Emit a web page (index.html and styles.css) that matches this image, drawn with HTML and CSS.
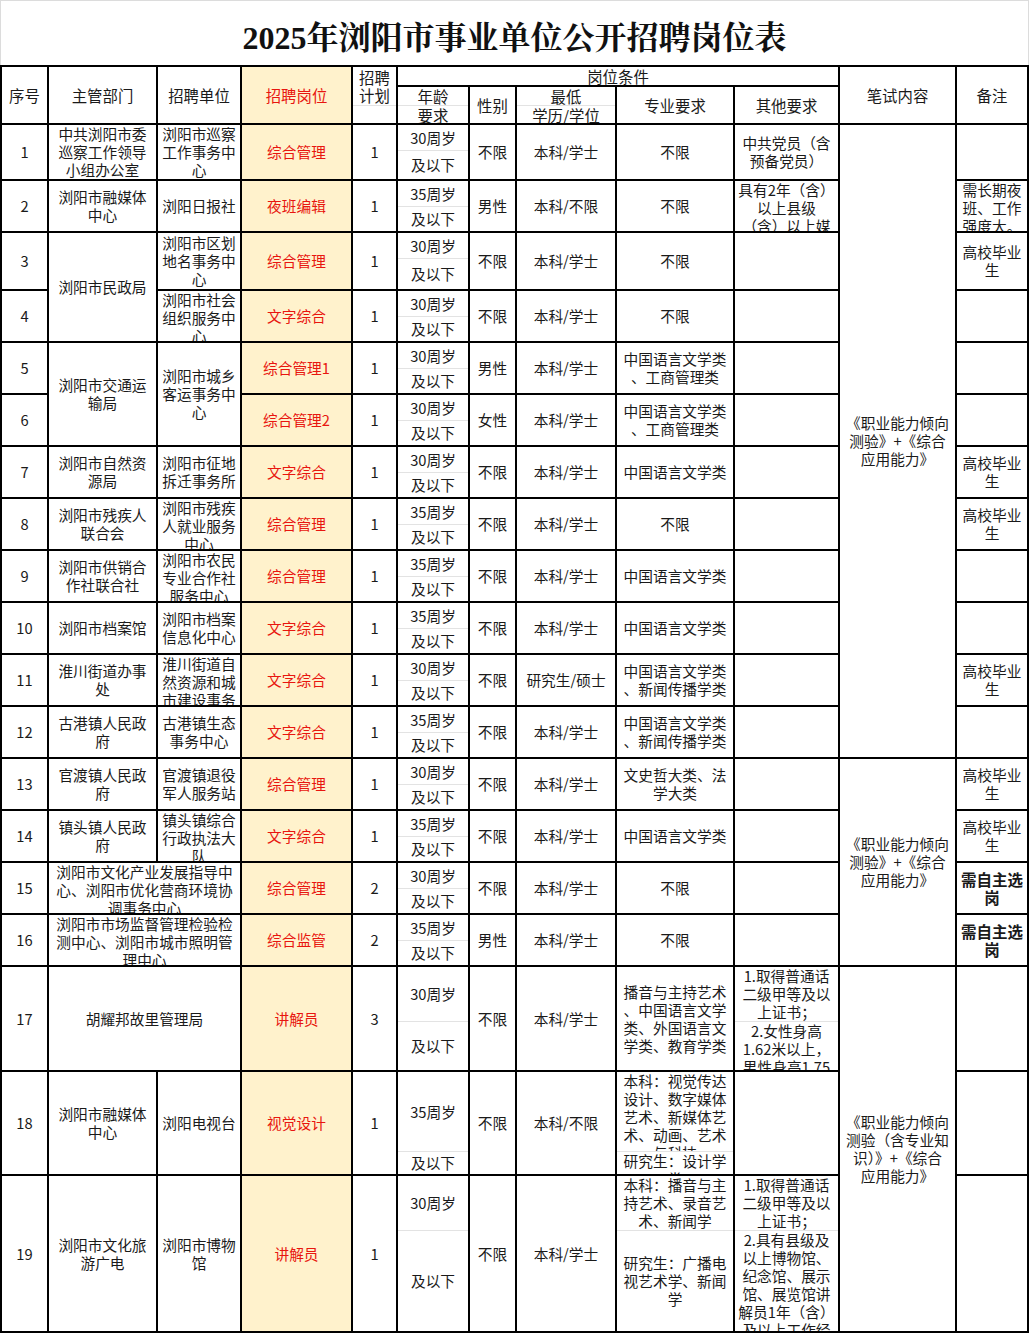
FILE: index.html
```html
<!DOCTYPE html>
<html lang="zh-CN">
<head>
<meta charset="utf-8">
<title>2025年浏阳市事业单位公开招聘岗位表</title>
<link rel="stylesheet" href="styles.css">
</head>
<body>
<div class="title">2025年浏阳市事业单位公开招聘岗位表</div>
<div class="sheet">
  <!-- header -->
  <div class="c hd rs2"><span>序号</span></div>
  <div class="c hd rs2"><span>主管部门</span></div>
  <div class="c hd rs2"><span>招聘单位</span></div>
  <div class="c hd rs2 y"><span>招聘岗位</span></div>
  <div class="c hd rs2 sp"><div class="t t38"><span>招聘<br>计划</span></div><div class="b"></div></div>
  <div class="c hd cs5"><span>岗位条件</span></div>
  <div class="c hd rs2"><span>笔试内容</span></div>
  <div class="c hd rs2"><span>备注</span></div>
  <div class="c hd sp"><div class="t t18"><span>年龄</span></div><div class="b"><span>要求</span></div></div>
  <div class="c hd"><span>性别</span></div>
  <div class="c hd sp"><div class="t t18"><span>最低</span></div><div class="b"><span>学历/学位</span></div></div>
  <div class="c hd"><span>专业要求</span></div>
  <div class="c hd"><span>其他要求</span></div>

  <!-- 1 -->
  <div class="c"><span>1</span></div>
  <div class="c"><span>中共浏阳市委<br>巡察工作领导<br>小组办公室</span></div>
  <div class="c"><span>浏阳市巡察<br>工作事务中<br>心</span></div>
  <div class="c y"><span>综合管理</span></div>
  <div class="c"><span>1</span></div>
  <div class="c sp"><div class="t"><span>30周岁</span></div><div class="b"><span>及以下</span></div></div>
  <div class="c"><span>不限</span></div>
  <div class="c"><span>本科/学士</span></div>
  <div class="c"><span>不限</span></div>
  <div class="c"><span>中共党员（含<br>预备党员）</span></div>
  <div class="c rs12"><span>《职业能力倾向<br>测验》+《综合<br>应用能力》</span></div>
  <div class="c"></div>

  <!-- 2 -->
  <div class="c"><span>2</span></div>
  <div class="c"><span>浏阳市融媒体<br>中心</span></div>
  <div class="c"><span>浏阳日报社</span></div>
  <div class="c y"><span>夜班编辑</span></div>
  <div class="c"><span>1</span></div>
  <div class="c sp"><div class="t"><span>35周岁</span></div><div class="b"><span>及以下</span></div></div>
  <div class="c"><span>男性</span></div>
  <div class="c"><span>本科/不限</span></div>
  <div class="c"><span>不限</span></div>
  <div class="c"><span>具有2年（含）<br>以上县级<br>（含）以上媒<br>体工作经历</span></div>
  <div class="c"><span>需长期夜<br>班、工作<br>强度大。</span></div>

  <!-- 3 -->
  <div class="c"><span>3</span></div>
  <div class="c rs2"><span>浏阳市民政局</span></div>
  <div class="c"><span>浏阳市区划<br>地名事务中<br>心</span></div>
  <div class="c y"><span>综合管理</span></div>
  <div class="c"><span>1</span></div>
  <div class="c sp"><div class="t"><span>30周岁</span></div><div class="b"><span>及以下</span></div></div>
  <div class="c"><span>不限</span></div>
  <div class="c"><span>本科/学士</span></div>
  <div class="c"><span>不限</span></div>
  <div class="c"></div>
  <div class="c"><span>高校毕业<br>生</span></div>

  <!-- 4 -->
  <div class="c"><span>4</span></div>
  <div class="c"><span>浏阳市社会<br>组织服务中<br>心</span></div>
  <div class="c y"><span>文字综合</span></div>
  <div class="c"><span>1</span></div>
  <div class="c sp"><div class="t"><span>30周岁</span></div><div class="b"><span>及以下</span></div></div>
  <div class="c"><span>不限</span></div>
  <div class="c"><span>本科/学士</span></div>
  <div class="c"><span>不限</span></div>
  <div class="c"></div>
  <div class="c"></div>

  <!-- 5 -->
  <div class="c"><span>5</span></div>
  <div class="c rs2"><span>浏阳市交通运<br>输局</span></div>
  <div class="c rs2"><span>浏阳市城乡<br>客运事务中<br>心</span></div>
  <div class="c y"><span>综合管理1</span></div>
  <div class="c"><span>1</span></div>
  <div class="c sp"><div class="t"><span>30周岁</span></div><div class="b"><span>及以下</span></div></div>
  <div class="c"><span>男性</span></div>
  <div class="c"><span>本科/学士</span></div>
  <div class="c"><span>中国语言文学类<br>、工商管理类</span></div>
  <div class="c"></div>
  <div class="c"></div>

  <!-- 6 -->
  <div class="c"><span>6</span></div>
  <div class="c y"><span>综合管理2</span></div>
  <div class="c"><span>1</span></div>
  <div class="c sp"><div class="t"><span>30周岁</span></div><div class="b"><span>及以下</span></div></div>
  <div class="c"><span>女性</span></div>
  <div class="c"><span>本科/学士</span></div>
  <div class="c"><span>中国语言文学类<br>、工商管理类</span></div>
  <div class="c"></div>
  <div class="c"></div>

  <!-- 7 -->
  <div class="c"><span>7</span></div>
  <div class="c"><span>浏阳市自然资<br>源局</span></div>
  <div class="c"><span>浏阳市征地<br>拆迁事务所</span></div>
  <div class="c y"><span>文字综合</span></div>
  <div class="c"><span>1</span></div>
  <div class="c sp"><div class="t"><span>30周岁</span></div><div class="b"><span>及以下</span></div></div>
  <div class="c"><span>不限</span></div>
  <div class="c"><span>本科/学士</span></div>
  <div class="c"><span>中国语言文学类</span></div>
  <div class="c"></div>
  <div class="c"><span>高校毕业<br>生</span></div>

  <!-- 8 -->
  <div class="c"><span>8</span></div>
  <div class="c"><span>浏阳市残疾人<br>联合会</span></div>
  <div class="c"><span>浏阳市残疾<br>人就业服务<br>中心</span></div>
  <div class="c y"><span>综合管理</span></div>
  <div class="c"><span>1</span></div>
  <div class="c sp"><div class="t"><span>35周岁</span></div><div class="b"><span>及以下</span></div></div>
  <div class="c"><span>不限</span></div>
  <div class="c"><span>本科/学士</span></div>
  <div class="c"><span>不限</span></div>
  <div class="c"></div>
  <div class="c"><span>高校毕业<br>生</span></div>

  <!-- 9 -->
  <div class="c"><span>9</span></div>
  <div class="c"><span>浏阳市供销合<br>作社联合社</span></div>
  <div class="c"><span>浏阳市农民<br>专业合作社<br>服务中心</span></div>
  <div class="c y"><span>综合管理</span></div>
  <div class="c"><span>1</span></div>
  <div class="c sp"><div class="t"><span>35周岁</span></div><div class="b"><span>及以下</span></div></div>
  <div class="c"><span>不限</span></div>
  <div class="c"><span>本科/学士</span></div>
  <div class="c"><span>中国语言文学类</span></div>
  <div class="c"></div>
  <div class="c"></div>

  <!-- 10 -->
  <div class="c"><span>10</span></div>
  <div class="c"><span>浏阳市档案馆</span></div>
  <div class="c"><span>浏阳市档案<br>信息化中心</span></div>
  <div class="c y"><span>文字综合</span></div>
  <div class="c"><span>1</span></div>
  <div class="c sp"><div class="t"><span>35周岁</span></div><div class="b"><span>及以下</span></div></div>
  <div class="c"><span>不限</span></div>
  <div class="c"><span>本科/学士</span></div>
  <div class="c"><span>中国语言文学类</span></div>
  <div class="c"></div>
  <div class="c"></div>

  <!-- 11 -->
  <div class="c"><span>11</span></div>
  <div class="c"><span>淮川街道办事<br>处</span></div>
  <div class="c"><span>淮川街道自<br>然资源和城<br>市建设事务<br>中心</span></div>
  <div class="c y"><span>文字综合</span></div>
  <div class="c"><span>1</span></div>
  <div class="c sp"><div class="t"><span>30周岁</span></div><div class="b"><span>及以下</span></div></div>
  <div class="c"><span>不限</span></div>
  <div class="c"><span>研究生/硕士</span></div>
  <div class="c"><span>中国语言文学类<br>、新闻传播学类</span></div>
  <div class="c"></div>
  <div class="c"><span>高校毕业<br>生</span></div>

  <!-- 12 -->
  <div class="c"><span>12</span></div>
  <div class="c"><span>古港镇人民政<br>府</span></div>
  <div class="c"><span>古港镇生态<br>事务中心</span></div>
  <div class="c y"><span>文字综合</span></div>
  <div class="c"><span>1</span></div>
  <div class="c sp"><div class="t"><span>35周岁</span></div><div class="b"><span>及以下</span></div></div>
  <div class="c"><span>不限</span></div>
  <div class="c"><span>本科/学士</span></div>
  <div class="c"><span>中国语言文学类<br>、新闻传播学类</span></div>
  <div class="c"></div>
  <div class="c"></div>

  <!-- 13 -->
  <div class="c"><span>13</span></div>
  <div class="c"><span>官渡镇人民政<br>府</span></div>
  <div class="c"><span>官渡镇退役<br>军人服务站</span></div>
  <div class="c y"><span>综合管理</span></div>
  <div class="c"><span>1</span></div>
  <div class="c sp"><div class="t"><span>30周岁</span></div><div class="b"><span>及以下</span></div></div>
  <div class="c"><span>不限</span></div>
  <div class="c"><span>本科/学士</span></div>
  <div class="c"><span>文史哲大类、法<br>学大类</span></div>
  <div class="c"></div>
  <div class="c rs4"><span>《职业能力倾向<br>测验》+《综合<br>应用能力》</span></div>
  <div class="c"><span>高校毕业<br>生</span></div>

  <!-- 14 -->
  <div class="c"><span>14</span></div>
  <div class="c"><span>镇头镇人民政<br>府</span></div>
  <div class="c"><span>镇头镇综合<br>行政执法大<br>队</span></div>
  <div class="c y"><span>文字综合</span></div>
  <div class="c"><span>1</span></div>
  <div class="c sp"><div class="t"><span>35周岁</span></div><div class="b"><span>及以下</span></div></div>
  <div class="c"><span>不限</span></div>
  <div class="c"><span>本科/学士</span></div>
  <div class="c"><span>中国语言文学类</span></div>
  <div class="c"></div>
  <div class="c"><span>高校毕业<br>生</span></div>

  <!-- 15 -->
  <div class="c"><span>15</span></div>
  <div class="c cs2"><span>浏阳市文化产业发展指导中<br>心、浏阳市优化营商环境协<br>调事务中心</span></div>
  <div class="c y"><span>综合管理</span></div>
  <div class="c"><span>2</span></div>
  <div class="c sp"><div class="t"><span>30周岁</span></div><div class="b"><span>及以下</span></div></div>
  <div class="c"><span>不限</span></div>
  <div class="c"><span>本科/学士</span></div>
  <div class="c"><span>不限</span></div>
  <div class="c"></div>
  <div class="c strong"><span>需自主选<br>岗</span></div>

  <!-- 16 -->
  <div class="c"><span>16</span></div>
  <div class="c cs2"><span>浏阳市市场监督管理检验检<br>测中心、浏阳市城市照明管<br>理中心</span></div>
  <div class="c y"><span>综合监管</span></div>
  <div class="c"><span>2</span></div>
  <div class="c sp"><div class="t"><span>35周岁</span></div><div class="b"><span>及以下</span></div></div>
  <div class="c"><span>男性</span></div>
  <div class="c"><span>本科/学士</span></div>
  <div class="c"><span>不限</span></div>
  <div class="c"></div>
  <div class="c strong"><span>需自主选<br>岗</span></div>

  <!-- 17 -->
  <div class="c"><span>17</span></div>
  <div class="c cs2"><span>胡耀邦故里管理局</span></div>
  <div class="c y"><span>讲解员</span></div>
  <div class="c"><span>3</span></div>
  <div class="c sp"><div class="t t54"><span>30周岁</span></div><div class="b"><span>及以下</span></div></div>
  <div class="c"><span>不限</span></div>
  <div class="c"><span>本科/学士</span></div>
  <div class="c"><span>播音与主持艺术<br>、中国语言文学<br>类、外国语言文<br>学类、教育学类</span></div>
  <div class="c sp"><div class="t t54"><span>1.取得普通话<br>二级甲等及以<br>上证书；</span></div><div class="b"><span>2.女性身高<br>1.62米以上，<br>男性身高1.75<br>米以上</span></div></div>
  <div class="c rs3"><span>《职业能力倾向<br>测验（含专业知<br>识）》+《综合<br>应用能力》</span></div>
  <div class="c"></div>

  <!-- 18 -->
  <div class="c"><span>18</span></div>
  <div class="c"><span>浏阳市融媒体<br>中心</span></div>
  <div class="c"><span>浏阳电视台</span></div>
  <div class="c y"><span>视觉设计</span></div>
  <div class="c"><span>1</span></div>
  <div class="c sp"><div class="t t79"><span>35周岁</span></div><div class="b"><span>及以下</span></div></div>
  <div class="c"><span>不限</span></div>
  <div class="c"><span>本科/不限</span></div>
  <div class="c sp"><div class="t t79"><span>本科：视觉传达<br>设计、数字媒体<br>艺术、新媒体艺<br>术、动画、艺术<br>与科技</span></div><div class="b"><span>研究生：设计学<br>类</span></div></div>
  <div class="c"></div>
  <div class="c"></div>

  <!-- 19 -->
  <div class="c"><span>19</span></div>
  <div class="c"><span>浏阳市文化旅<br>游广电</span></div>
  <div class="c"><span>浏阳市博物<br>馆</span></div>
  <div class="c y"><span>讲解员</span></div>
  <div class="c"><span>1</span></div>
  <div class="c sp"><div class="t t54"><span>30周岁</span></div><div class="b"><span>及以下</span></div></div>
  <div class="c"><span>不限</span></div>
  <div class="c"><span>本科/学士</span></div>
  <div class="c sp"><div class="t t54"><span>本科：播音与主<br>持艺术、录音艺<br>术、新闻学</span></div><div class="b"><span>研究生：广播电<br>视艺术学、新闻<br>学</span></div></div>
  <div class="c sp"><div class="t t54"><span>1.取得普通话<br>二级甲等及以<br>上证书；</span></div><div class="b"><span>2.具有县级及<br>以上博物馆、<br>纪念馆、展示<br>馆、展览馆讲<br>解员1年（含）<br>及以上工作经<br>历</span></div></div>
  <div class="c"></div>
</div>
</body>
</html>
```
FILE: styles.css
```css
* {
  box-sizing: border-box;
  margin: 0;
  padding: 0;
}

body {
  margin: 0;
  background: #fff;
  color: #1a1a1a;
  font-family: "Noto Sans CJK SC", "Noto Sans CJK JP", sans-serif;
}

.title {
  height: 65px;
  width: 1029px;
  border: 1px solid #dcdcdc;
  border-bottom: 0;
  display: flex;
  align-items: center;
  justify-content: center;
  padding-top: 3px;
  font-family: "Liberation Serif", "Noto Serif CJK SC", "Noto Sans CJK SC", serif;
  font-weight: 700;
  font-size: 32px;
  color: #111;
}

.sheet {
  display: grid;
  width: 1029px;
  padding: 2px;
  gap: 2px;
  background: #000;
  grid-template-columns: 45px 107px 82px 109px 43px 70px 45px 98px 116px 103px 115px 70px;
  grid-template-rows: 18px 36px 54px 50px 56px 50px repeat(12, 50px) 103px 102px 155px;
}

.c {
  background: #fff;
  display: flex;
  overflow: hidden;
  font-size: 14.7px;
  line-height: 18px;
  text-align: center;
  white-space: nowrap;
  min-width: 0;
  min-height: 0;
}

.c > span,
.t > span,
.b > span {
  margin: auto;
}

.hd {
  font-size: 15.4px;
  line-height: 18px;
}

.y {
  background: #fff2cc;
  color: #e8160f;
}

.strong {
  font-weight: 700;
  font-size: 15.5px;
}

.rs2 { grid-row: span 2; }
.rs3 { grid-row: span 3; }
.rs4 { grid-row: span 4; }
.rs12 { grid-row: span 12; }
.cs2 { grid-column: span 2; }
.cs5 { grid-column: span 5; }

.sp {
  flex-direction: column;
}

.sp > .t,
.sp > .b {
  display: flex;
  overflow: hidden;
  min-height: 0;
}

.sp > .t {
  flex: none;
  height: 25px;
}

.sp > .b {
  flex: 1;
  border-top: 1px solid #e3e3e3;
}

.sp > .t18 { height: 18px; }
.sp > .t38 { height: 38px; }
.sp > .t54 { height: 54px; }
.sp > .t79 { height: 79px; }
```
